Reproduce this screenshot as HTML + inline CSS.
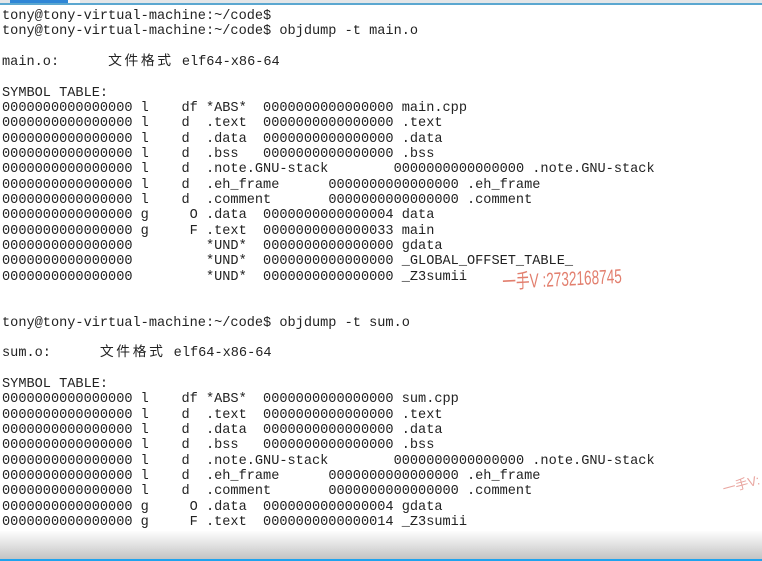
<!DOCTYPE html>
<html><head><meta charset="utf-8"><style>
html,body{margin:0;padding:0;width:762px;height:561px;overflow:hidden;background:#fff;position:relative}
.top{position:absolute;left:0;top:0;width:762px;height:3px;background:#e4e6e8}
.topline{position:absolute;left:0;top:3px;width:762px;height:2px;background:#5ba7d0}
.tab{position:absolute;left:10px;top:0;width:58px;height:3px;background:#2f86d6}
.tab2{position:absolute;left:68px;top:0;width:12px;height:3px;background:#fafafa}
pre{position:absolute;left:2px;top:9px;margin:0;font-family:"Liberation Mono",monospace;font-size:13.6px;line-height:15.33px;color:#222;tab-size:8;-moz-tab-size:8;white-space:pre}
.cj{font-family:"Noto Sans CJK SC",sans-serif;letter-spacing:2.6px;font-size:13.8px;line-height:0;display:inline-block;vertical-align:baseline}
.bot{position:absolute;left:0;top:531px;width:762px;height:28px;background:linear-gradient(#fdfdfd,#c4c4c4)}
.botline{position:absolute;left:0;top:559px;width:762px;height:2px;background:#1fa3ee}
.wm{position:absolute;left:502px;top:266px;color:#e27f6e;font-family:"Liberation Sans","Noto Sans CJK SC",sans-serif;font-size:20px;transform:scaleX(0.68) rotate(-2deg);transform-origin:left top;white-space:nowrap}
.wm2{position:absolute;left:722px;top:474px;color:#e9a6a0;font-family:"Liberation Sans","Noto Sans CJK SC",sans-serif;font-size:13px;transform:rotate(-15deg);white-space:nowrap}
</style></head><body>
<div class="top"></div><div class="tab"></div><div class="tab2"></div><div class="topline"></div>
<pre>tony@tony-virtual-machine:~/code$
tony@tony-virtual-machine:~/code$ objdump -t main.o

main.o:      <span class="cj">文件格式</span> elf64-x86-64

SYMBOL TABLE:
0000000000000000 l    df *ABS*	0000000000000000 main.cpp
0000000000000000 l    d  .text	0000000000000000 .text
0000000000000000 l    d  .data	0000000000000000 .data
0000000000000000 l    d  .bss	0000000000000000 .bss
0000000000000000 l    d  .note.GNU-stack	0000000000000000 .note.GNU-stack
0000000000000000 l    d  .eh_frame	0000000000000000 .eh_frame
0000000000000000 l    d  .comment	0000000000000000 .comment
0000000000000000 g     O .data	0000000000000004 data
0000000000000000 g     F .text	0000000000000033 main
0000000000000000         *UND*	0000000000000000 gdata
0000000000000000         *UND*	0000000000000000 _GLOBAL_OFFSET_TABLE_
0000000000000000         *UND*	0000000000000000 _Z3sumii


tony@tony-virtual-machine:~/code$ objdump -t sum.o

sum.o:      <span class="cj">文件格式</span> elf64-x86-64

SYMBOL TABLE:
0000000000000000 l    df *ABS*	0000000000000000 sum.cpp
0000000000000000 l    d  .text	0000000000000000 .text
0000000000000000 l    d  .data	0000000000000000 .data
0000000000000000 l    d  .bss	0000000000000000 .bss
0000000000000000 l    d  .note.GNU-stack	0000000000000000 .note.GNU-stack
0000000000000000 l    d  .eh_frame	0000000000000000 .eh_frame
0000000000000000 l    d  .comment	0000000000000000 .comment
0000000000000000 g     O .data	0000000000000004 gdata
0000000000000000 g     F .text	0000000000000014 _Z3sumii</pre>
<div class="wm">一手V :2732168745</div>
<div class="wm2">一手V:</div>
<div class="bot"></div><div class="botline"></div>
</body></html>
